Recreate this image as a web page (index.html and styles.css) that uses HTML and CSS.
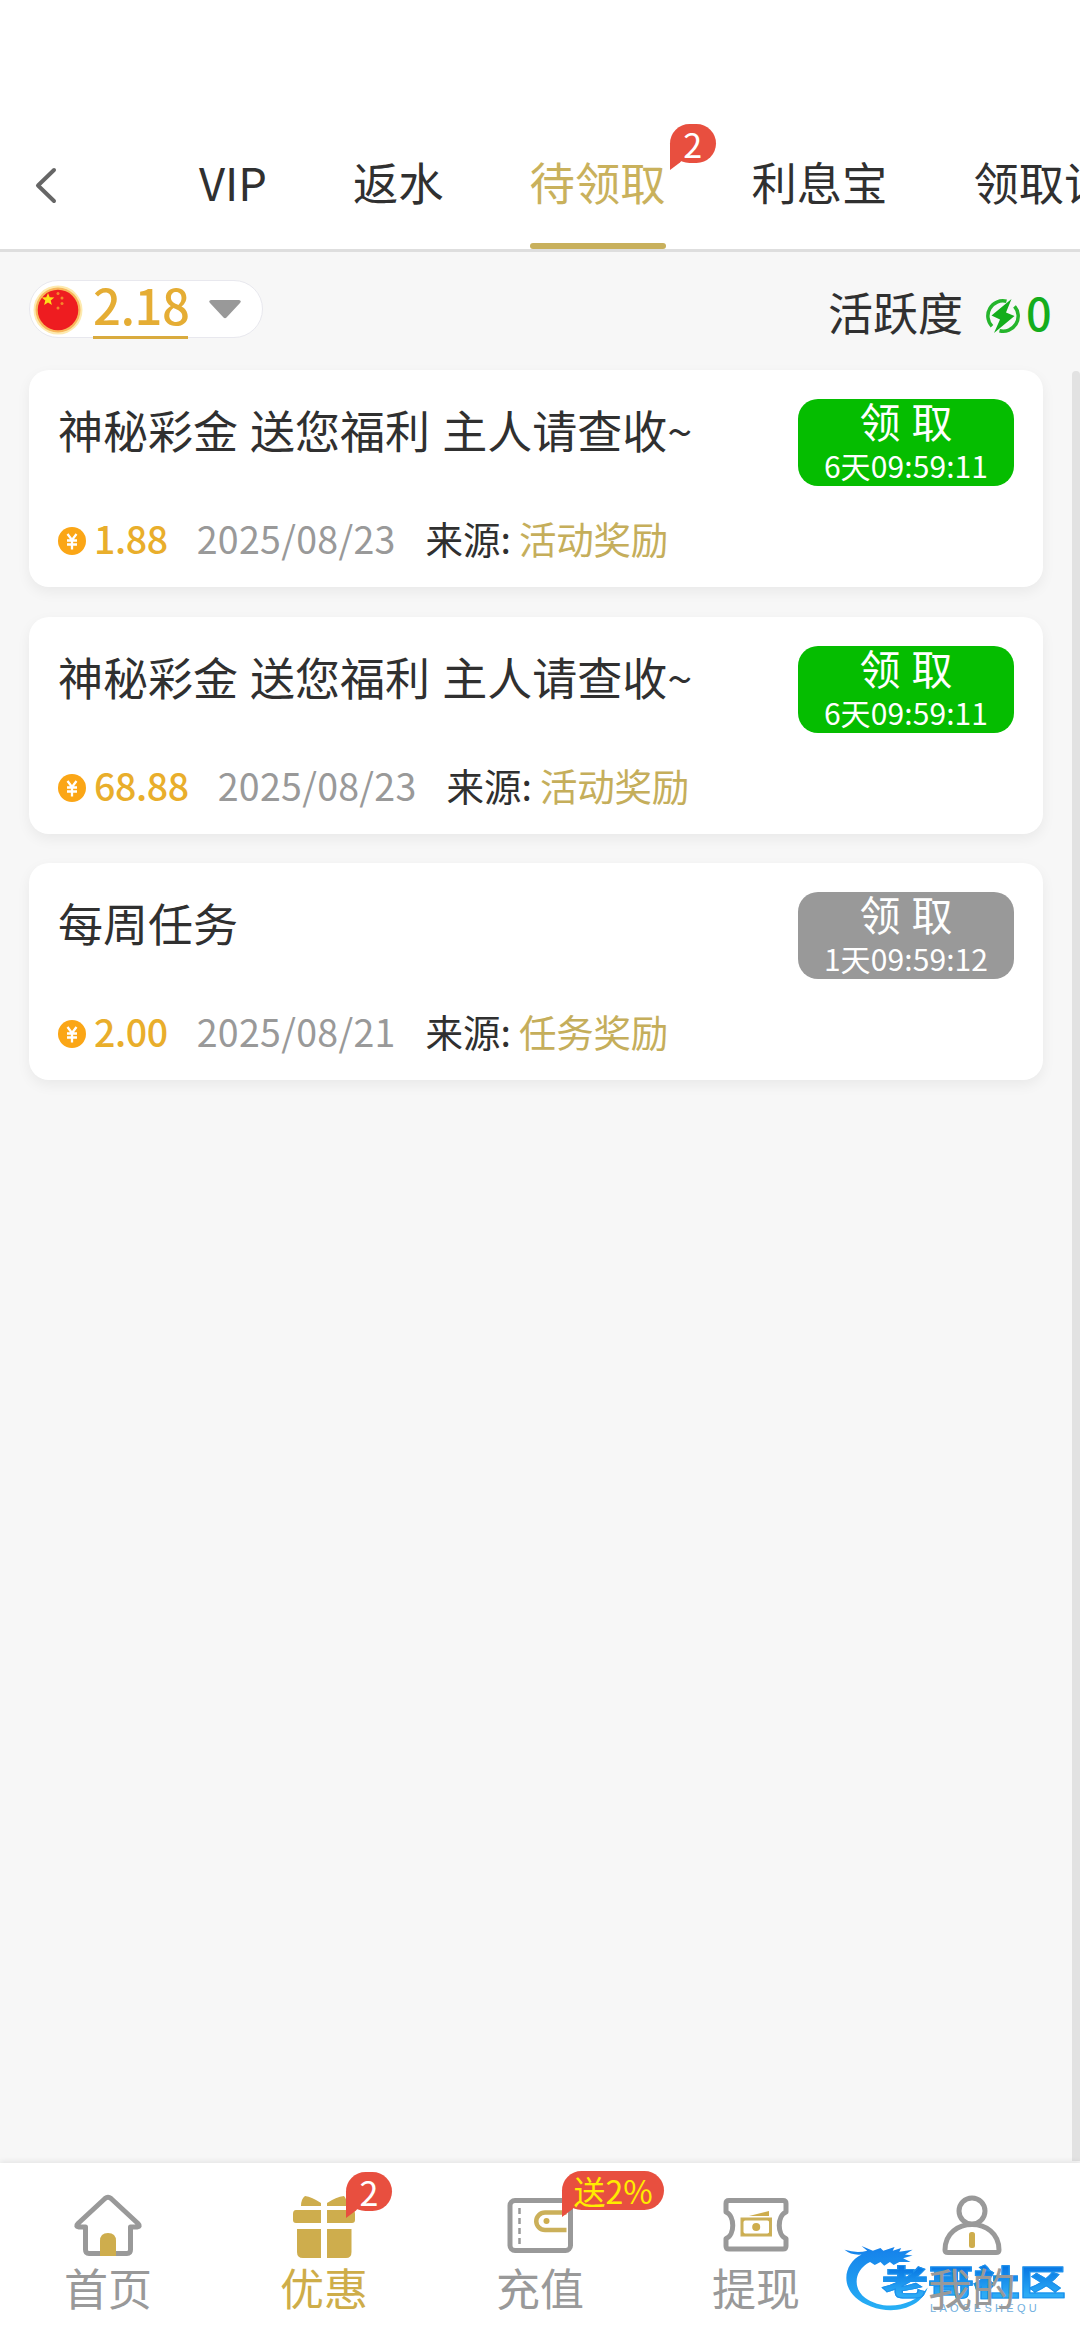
FILE: index.html
```html
<!DOCTYPE html>
<html lang="zh-CN">
<head>
<meta charset="utf-8">
<title>待领取</title>
<link rel="stylesheet" href="styles.css">
</head>
<body>
<div class="app">
  <header class="header">
    <svg class="back" viewBox="0 0 24 38"><path d="M20 3 4 18.500 20 34"/></svg>
    <nav class="tabs">
      <a class="tab tab-vip">VIP</a>
      <a class="tab">返水</a>
      <a class="tab active">待领取<span class="badge tab-badge"><svg class="tail" viewBox="0 0 15 27"><path d="M0 0H15V14L10 19.500 0 27Z"/></svg><span>2</span></span></a>
      <a class="tab">利息宝</a>
      <a class="tab">领取记录</a>
    </nav>
  </header>

  <main class="content">
    <div class="summary">
      <div class="wallet">
        <svg class="flag" viewBox="0 0 50 50">
          <circle cx="25" cy="25" r="24.500" fill="#fdeab0"/><circle cx="25" cy="25" r="22.500" fill="#f8b75c"/><circle cx="25" cy="25" r="20.300" fill="#ee1c20"/>
          <path fill="#fde01a" d="m15 8 1.700 4.300 4.600.3-3.600 2.900 1.200 4.500-3.900-2.500-3.900 2.500 1.200-4.500-3.600-2.900 4.600-.3z"/>
          <g fill="#f5872b"><circle cx="25" cy="8.500" r="1.500"/><circle cx="29" cy="13" r="1.500"/><circle cx="29" cy="18.500" r="1.500"/><circle cx="25" cy="23" r="1.500"/></g>
        </svg>
        <span class="balance">2.18</span>
        <svg class="caret" viewBox="0 0 32 19"><path d="M2 0H30Q33 1 31 3L17.500 17.500Q16 19 14.500 17.500L1 3Q-1 1 2 0Z"/></svg>
      </div>
      <div class="activity">
        <span>活跃度</span>
        <svg class="bolt" viewBox="0 0 34 34"><path class="ring" d="M20.500 2.300A15 15 0 0 0 6 27.200M13.500 31.700A15 15 0 0 0 28.500 7.300"/><path d="M25.500 0 5.500 16.500 14 20.500 8 34 28.500 17 20 13.500Z"/></svg>
        <span class="score">0</span>
      </div>
    </div>

    <section class="list">
      <article class="card">
        <div class="card-top">
          <h2 class="title">神秘彩金 送您福利 主人请查收~</h2>
          <button class="claim"><span class="claim-label">领 取</span><span class="claim-time">6天09:59:11</span></button>
        </div>
        <div class="meta">
          <svg class="coin" viewBox="0 0 28 28"><circle cx="14" cy="14" r="14"/><path d="M9.500 7 14 13 18.500 7M14 13V22.500M9 13.500H19M9 17.500H19"/></svg>
          <span class="amount">1.88</span><time class="date">2025/08/23</time><span class="label">来源:</span><span class="source">活动奖励</span>
        </div>
      </article>
      <article class="card">
        <div class="card-top">
          <h2 class="title">神秘彩金 送您福利 主人请查收~</h2>
          <button class="claim"><span class="claim-label">领 取</span><span class="claim-time">6天09:59:11</span></button>
        </div>
        <div class="meta">
          <svg class="coin" viewBox="0 0 28 28"><circle cx="14" cy="14" r="14"/><path d="M9.500 7 14 13 18.500 7M14 13V22.500M9 13.500H19M9 17.500H19"/></svg>
          <span class="amount">68.88</span><time class="date">2025/08/23</time><span class="label">来源:</span><span class="source">活动奖励</span>
        </div>
      </article>
      <article class="card">
        <div class="card-top">
          <h2 class="title">每周任务</h2>
          <button class="claim disabled"><span class="claim-label">领 取</span><span class="claim-time">1天09:59:12</span></button>
        </div>
        <div class="meta">
          <svg class="coin" viewBox="0 0 28 28"><circle cx="14" cy="14" r="14"/><path d="M9.500 7 14 13 18.500 7M14 13V22.500M9 13.500H19M9 17.500H19"/></svg>
          <span class="amount">2.00</span><time class="date">2025/08/21</time><span class="label">来源:</span><span class="source">任务奖励</span>
        </div>
      </article>
    </section>
    <div class="scrollbar"></div>
  </main>

  <nav class="bottom">
    <div class="watermark">
      <svg class="dragon" viewBox="0 0 92 72">
        <defs><linearGradient id="sea" x1="0" y1="0" x2="0" y2="1"><stop offset="0" stop-color="#1580ea"/><stop offset="1" stop-color="#27b0f5"/></linearGradient></defs>
        <path fill="url(#sea)" d="M0 4Q13 8 24 5L18 0 30 5 38 2 41 5 53 1 51 5 60 2 58 6 72 4 64 9 72 10 62 13 70 17 58 17 52 20 48 17 42 21 38 17 32 20 27 17C9 26 9 46 22 55C40 68 71 66 88 44C82 64 54 74 28 64C-6 52-4 20 18 9Q7 10 0 4Z"/>
      </svg>
      <div class="brand"><b>老哥社区</b><small>LAOGESHEQU</small></div>
    </div>
    <a class="item">
      <svg class="icon" viewBox="0 0 68 64"><path class="line" d="M11.500 33V55.500Q11.500 59.500 15 59.500H53Q56.500 59.500 56.500 55.500V33H63Q67 32.500 64 29.500L37 4.500Q34 2 31 4.500L4 29.500Q1 32.500 5 33Z"/><path class="gold" d="M26 62V47Q26 39 34 39T42 47V62Z"/></svg>
      <span>首页</span>
    </a>
    <a class="item selected">
      <svg class="icon" viewBox="0 0 68 64"><path class="gold" d="M15 2Q22 3 31 9V12H11Q11 5 15 2ZM54 2Q46 3 37 9V12H57Q57 5 54 2ZM6 16H31V29H6Q3 29 3 26V20Q3 16 6 16ZM37 16H62Q65 16 65 20V26Q65 29 62 29H37ZM7 35H31V64H13Q7 64 7 58ZM37 35H61.500V58Q61.500 64 56 64H37Z"/></svg>
      <span>优惠</span>
      <span class="badge nav-badge"><svg class="tail" viewBox="0 0 15 27"><path d="M0 0H15V14L10 19.500 0 27Z"/></svg><span>2</span></span>
    </a>
    <a class="item">
      <svg class="icon" viewBox="0 0 68 64"><rect class="line" x="4" y="6.500" width="60.500" height="50" rx="5"/><path class="dash" d="M13.500 14V50"/><path class="gold-line" d="M60.500 18.500H39a8.500 8.500 0 0 0 0 17.500H60.500"/><circle class="gold" cx="40.500" cy="27" r="3"/></svg>
      <span>充值</span>
      <span class="badge promo"><svg class="tail" viewBox="0 0 15 27"><path d="M0 0H15V14L10 19.500 0 27Z"/></svg><span>送2%</span></span>
    </a>
    <a class="item">
      <svg class="icon" viewBox="0 0 68 64"><path class="line" d="M7 6.500H61Q64 6.500 64 9.500V18C55 22 55 41 64 44.500V52Q64 55 61 55H7Q4 55 4 52V44.500C13 41 13 22 4 18V9.500Q4 6.500 7 6.500Z"/><rect class="gold-line thin" x="20" y="25" width="28.500" height="16"/><circle class="gold" cx="34.200" cy="33" r="4"/><path class="gold" d="M27 22 47 17V22ZM20 25h4l-4 4zM48.500 25h-4l4 4zM20 41h4l-4-4zM48.500 41h-4l4-4z"/></svg>
      <span>提现</span>
    </a>
    <a class="item">
      <svg class="icon" viewBox="0 0 68 64"><circle class="line" cx="34" cy="17" r="13"/><path class="line" d="M7 56C7 22 61 22 61 56Q61 58.500 58 58.500H10Q7 58.500 7 56Z"/><rect class="gold" x="31" y="38" width="6" height="16" rx="2.500"/></svg>
      <span>我的</span>
    </a>
  </nav>
</div>
</body>
</html>
```
FILE: styles.css
```css
* { box-sizing: border-box; }
body { margin: 0; background: #f7f7f7; }
.app {
  width: 1080px; height: 2340px; display: flex; flex-direction: column;
  overflow: hidden; color: #303030;
  font-family: "Noto Sans CJK SC", "Noto Sans", sans-serif; font-weight: 400;
}
svg { display: block; flex: none; overflow: visible; }

.header {
  height: 252px; flex: none; display: flex; background: #fff;
  border-bottom: 3px solid #dedede; padding: 117px 0 0 34px;
}
.back { width: 24px; height: 38px; margin-top: 50px; fill: none; stroke: #666; stroke-width: 4; stroke-linecap: round; stroke-linejoin: round; }
.tabs { display: flex; gap: 86px; padding-left: 141px; white-space: nowrap; }
.tab { position: relative; height: 132px; font-size: 45.300px; line-height: 129px; flex: none; }
.tab-vip { width: 68px; }
.tab.active { color: #c9b15c; }
.tab.active::after { content: ""; position: absolute; left: 0; right: 0; bottom: 0; height: 6px; border-radius: 3px; background: #c8b05c; }

.badge {
  position: absolute; height: 39px; border-radius: 20px; background: #e84f3f;
  color: #fff; display: flex; justify-content: center; align-items: center;
  font-size: 34px; line-height: 39px;
}
.badge > span { position: relative; }
.tail { position: absolute; left: 0; top: 19px; width: 15px; height: 27px; fill: #e84f3f; }
.tab-badge { left: 140px; top: 7px; width: 46px; }

.content { position: relative; flex: 1; padding: 28px 37px 0 29px; }
.summary { height: 90px; display: flex; justify-content: space-between; align-items: flex-start; }
.wallet { width: 234px; height: 58px; border: 1px solid #e8e8ee; border-radius: 29px; background: #fff; display: flex; padding-left: 3px; }
.flag { width: 50px; height: 50px; margin-top: 4px; }
.balance { width: 95px; height: 58px; margin-left: 10px; border-bottom: 3px solid #d9ab3e; color: #e5ad34; font-size: 49px; line-height: 45px; text-align: center; font-weight: 500; letter-spacing: -.5px; }
.caret { width: 32px; height: 19px; margin: 19px 0 0 21px; fill: #999; }
.activity { display: flex; height: 66px; font-size: 45px; line-height: 64px; margin-right: -8px; }
.bolt { width: 34px; height: 34px; margin: 19px 6px 0 23px; fill: #14ad1c; }
.bolt .ring { fill: none; stroke: #25b52c; stroke-width: 3.5; }
.score { color: #14ad1c; font-weight: 500; width: 25px; }

.list { display: flex; flex-direction: column; gap: 29.500px; }
.card { height: 217px; border-radius: 20px; background: #fff; box-shadow: 0 5px 14px rgba(0,0,0,.06); padding: 29px 29px 0; }
.card-top { height: 117px; display: flex; justify-content: space-between; }
.title { margin: 0; font-size: 45px; font-weight: 400; line-height: 62px; white-space: nowrap; word-spacing: 2px; }
.claim {
  width: 216px; height: 87px; border: 0; border-radius: 20px; background: #05bd00; color: #fff; padding: 0;
  display: flex; flex-direction: column; align-items: center; justify-content: flex-start; font-family: inherit; white-space: nowrap;
}
.claim.disabled { background: #999; }
.claim-label { font-size: 41px; line-height: 43px; word-spacing: 2px; font-weight: 400; }
.claim-time { font-size: 30px; line-height: 46px; letter-spacing: .1px; }
.meta { height: 50px; display: flex; align-items: center; font-size: 37.500px; line-height: 44px; white-space: nowrap; }
.coin { width: 28px; height: 28px; fill: #fba616; }
.coin path { fill: none; stroke: #fff; stroke-width: 2.3; }
.meta > :not(.coin) { height: 50px; }
.amount { margin-left: 8px; color: #e9ae2b; font-weight: 500; letter-spacing: -.4px; }
.date { margin-left: 29px; color: #999; letter-spacing: .3px; }
.label { margin-left: 30px; }
.source { margin-left: 8px; color: #c5ae5b; letter-spacing: -.3px; }
.scrollbar { position: absolute; right: 0; top: 119px; bottom: 2px; width: 8px; border-radius: 4px 4px 0 0; background: #e2e2e2; }

.bottom { position: relative; height: 177px; flex: none; display: flex; background: #fff; box-shadow: 0 -2px 5px rgba(0,0,0,.07); }
.item { position: relative; flex: 1; display: flex; flex-direction: column; align-items: center; padding-top: 31px; color: #999; font-size: 44px; line-height: 59px; }
.item.selected { color: #cead49; }
.icon { width: 68px; height: 64px; }
.line { fill: none; stroke: #999; stroke-width: 5; stroke-linejoin: round; }
.gold { fill: #cead4d; }
.gold-line { fill: none; stroke: #cbb05a; stroke-width: 4.5; }
.gold-line.thin { stroke-width: 3; }
.dash { stroke: #999; stroke-width: 2.5; stroke-dasharray: 6 4; }
.nav-badge { left: 130px; top: 9px; width: 46px; }
.promo { left: 130px; top: 8px; width: 102px; color: #ffec00; font-size: 32px; white-space: nowrap; }

/* Site mark over the corner of the bar */
.watermark { position: absolute; left: 842px; top: 83px; width: 225px; height: 72px; }
.dragon { width: 92px; height: 68px; }
.brand { position: absolute; left: 40px; top: 13px; }
.brand b { display: block; font-size: 34px; line-height: 44px; font-weight: 900; white-space: nowrap; color: transparent; background: linear-gradient(#0878e4 20%, #2cabf5 80%); background-clip: text; -webkit-background-clip: text; -webkit-text-stroke: 1px #1c91ec; transform: scaleX(1.35); transform-origin: 0 0; width: 137px; }
.brand small { display: block; font-size: 11px; line-height: 11px; letter-spacing: 3.3px; padding-left: 48px; color: #71b0e0; font-family: "Liberation Sans", sans-serif; }
```
